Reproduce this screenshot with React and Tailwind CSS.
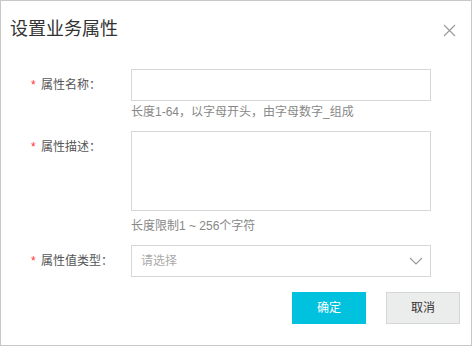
import React from "react";

const font = { fontFamily: '"Liberation Sans", "Noto Sans CJK SC", sans-serif' };

function Label({ text }) {
  return (
    <div className="w-[130px] shrink-0 pl-[30px] flex items-start h-[32px] leading-[32px]">
      <span className="text-[#f33] text-[12px] w-[10px]">*</span>
      <span className="text-[12px] text-[#555]">{text}</span>
    </div>
  );
}

export default function App() {
  return (
    <div className="w-[472px] h-[346px] bg-white border border-[#c8c8c8] box-border" style={font}>
      <div className="flex items-center justify-between pl-[9px] pr-[15px] pt-[14px] h-[42px]">
        <span className="text-[18px] leading-[28px] text-[#333]">设置业务属性</span>
        <svg width="13" height="13" viewBox="0 0 13 13" className="mt-[2px]">
          <path d="M1 1 L12 12 M12 1 L1 12" stroke="#999" strokeWidth="1.1" fill="none" />
        </svg>
      </div>
      <div className="pt-[26px]">
        <div className="flex">
          <Label text="属性名称：" />
          <div>
            <div className="w-[300px] h-[32px] border border-[#d6d6d6] box-border" />
            <div className="mt-[2px] text-[12px] leading-[18px] text-[#888]">长度1-64，以字母开头，由字母数字_组成</div>
          </div>
        </div>
        <div className="flex mt-[10px]">
          <Label text="属性描述：" />
          <div>
            <div className="w-[300px] h-[80px] border border-[#d6d6d6] box-border" />
            <div className="mt-[6px] text-[12px] leading-[18px] text-[#888]">长度限制1 ~ 256个字符</div>
          </div>
        </div>
        <div className="flex mt-[10px]">
          <Label text="属性值类型：" />
          <div className="w-[300px] h-[32px] border border-[#d6d6d6] box-border flex items-center justify-between pl-[9px] pr-[7px]">
            <span className="text-[12px] text-[#aaa]">请选择</span>
            <svg width="14" height="8" viewBox="0 0 14 8">
              <path d="M1 1 L7 7 L13 1" stroke="#999" strokeWidth="1.1" fill="none" />
            </svg>
          </div>
        </div>
        <div className="flex justify-end mt-[15px] pr-[11px] gap-[20px]">
          <button className="w-[74px] h-[32px] bg-[#00c1de] text-white text-[12px]">确定</button>
          <button className="w-[74px] h-[32px] bg-[#ebecec] border border-[#d6d6d6] box-border text-[#333] text-[12px]">取消</button>
        </div>
      </div>
    </div>
  );
}
